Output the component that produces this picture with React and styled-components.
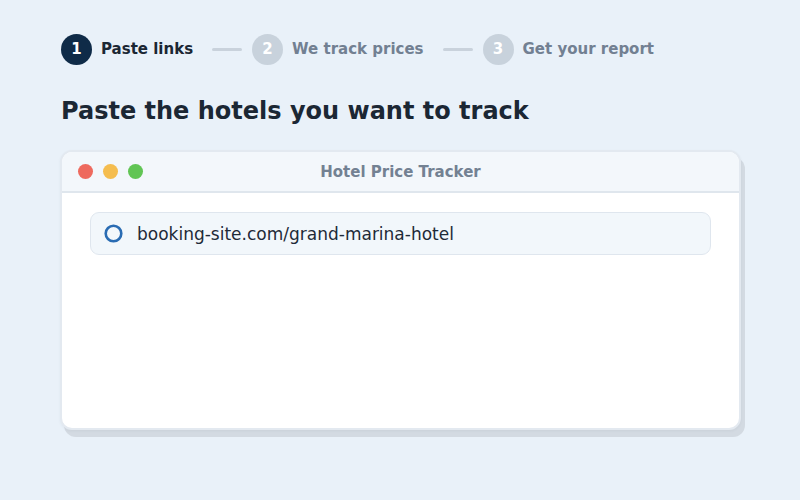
import React from "react";
import styled, { createGlobalStyle } from "styled-components";

const Global = createGlobalStyle`
  html, body { margin: 0; padding: 0; }
  body {
    width: 800px;
    height: 500px;
    background: #e9f1f9;
    font-family: "DejaVu Sans", "Noto Sans", sans-serif;
    overflow: hidden;
  }
`;

const Page = styled.div`
  padding: 33px 60px 0 61px;
  box-sizing: border-box;
`;

const Steps = styled.div`
  display: flex;
  align-items: center;
  height: 32px;
`;

const Step = styled.div`
  display: flex;
  align-items: center;
  gap: 9px;
`;

const StepNum = styled.div`
  width: 31px;
  height: 31px;
  border-radius: 50%;
  display: flex;
  align-items: center;
  justify-content: center;
  font-weight: bold;
  font-size: 15px;
  color: #ffffff;
  background: ${(p) => (p.$active ? "#0f2b48" : "#c8d2dc")};
`;

const StepLabel = styled.span`
  font-weight: bold;
  font-size: 15px;
  color: ${(p) => (p.$active ? "#1b2734" : "#728092")};
`;

const Connector = styled.div`
  width: 30px;
  height: 3px;
  border-radius: 2px;
  background: #c9d2dc;
  margin: 0 10px 0 19px;
`;

const Heading = styled.h1`
  margin: 32px 0 0 0;
  font-size: 24px;
  line-height: 28px;
  font-weight: bold;
  color: #1b2734;
`;

const Window = styled.div`
  margin-top: 25px;
  margin-left: -1px;
  width: 681px;
  height: 280px;
  box-sizing: border-box;
  border: 2px solid #e3e9f0;
  border-radius: 12px;
  background: #ffffff;
  box-shadow: 0 1px 3px rgba(30, 50, 70, 0.05), 4px 7px 0 #d3dae2;
  overflow: hidden;
  display: flex;
  flex-direction: column;
`;

const TitleBar = styled.div`
  position: relative;
  height: 39px;
  flex: none;
  background: #f3f7fb;
  border-bottom: 2px solid #dfe6ed;
  display: flex;
  align-items: center;
  padding-left: 16px;
  gap: 10px;
`;

const Dot = styled.span`
  width: 15px;
  height: 15px;
  border-radius: 50%;
  background: ${(p) => p.$color};
`;

const Title = styled.div`
  position: absolute;
  left: 0;
  right: 0;
  text-align: center;
  font-size: 15px;
  font-weight: bold;
  color: #738192;
  pointer-events: none;
`;

const Body = styled.div`
  padding: 19px 28px 0 28px;
`;

const LinkRow = styled.div`
  height: 43px;
  box-sizing: border-box;
  border: 1px solid #dfe6ee;
  border-radius: 9px;
  background: #f2f7fb;
  display: flex;
  align-items: center;
  padding-left: 13px;
  gap: 14px;
`;

const LinkText = styled.span`
  font-size: 17px;
  color: #1e2a38;
`;

const RingWrap = styled.span`
  display: flex;
  width: 19px;
  height: 19px;
`;

function Ring() {
  return (
    <RingWrap>
      <svg width="19" height="19" viewBox="0 0 19 19">
        <circle cx="9.5" cy="9.5" r="7.8" fill="none" stroke="#2a6cb3" strokeWidth="2.6" />
      </svg>
    </RingWrap>
  );
}

const steps = [
  { n: 1, label: "Paste links", active: true },
  { n: 2, label: "We track prices" },
  { n: 3, label: "Get your report" },
];

export default function App() {
  return (
    <>
      <Global />
      <Page>
        <Steps>
          {steps.map((s, i) => (
            <React.Fragment key={s.n}>
              {i > 0 && <Connector />}
              <Step>
                <StepNum $active={s.active}>{s.n}</StepNum>
                <StepLabel $active={s.active}>{s.label}</StepLabel>
              </Step>
            </React.Fragment>
          ))}
        </Steps>
        <Heading>Paste the hotels you want to track</Heading>
        <Window>
          <TitleBar>
            <Dot $color="#ee6a5e" />
            <Dot $color="#f5bd4f" />
            <Dot $color="#61c554" />
            <Title>Hotel Price Tracker</Title>
          </TitleBar>
          <Body>
            <LinkRow>
              <Ring />
              <LinkText>booking-site.com/grand-marina-hotel</LinkText>
            </LinkRow>
          </Body>
        </Window>
      </Page>
    </>
  );
}
